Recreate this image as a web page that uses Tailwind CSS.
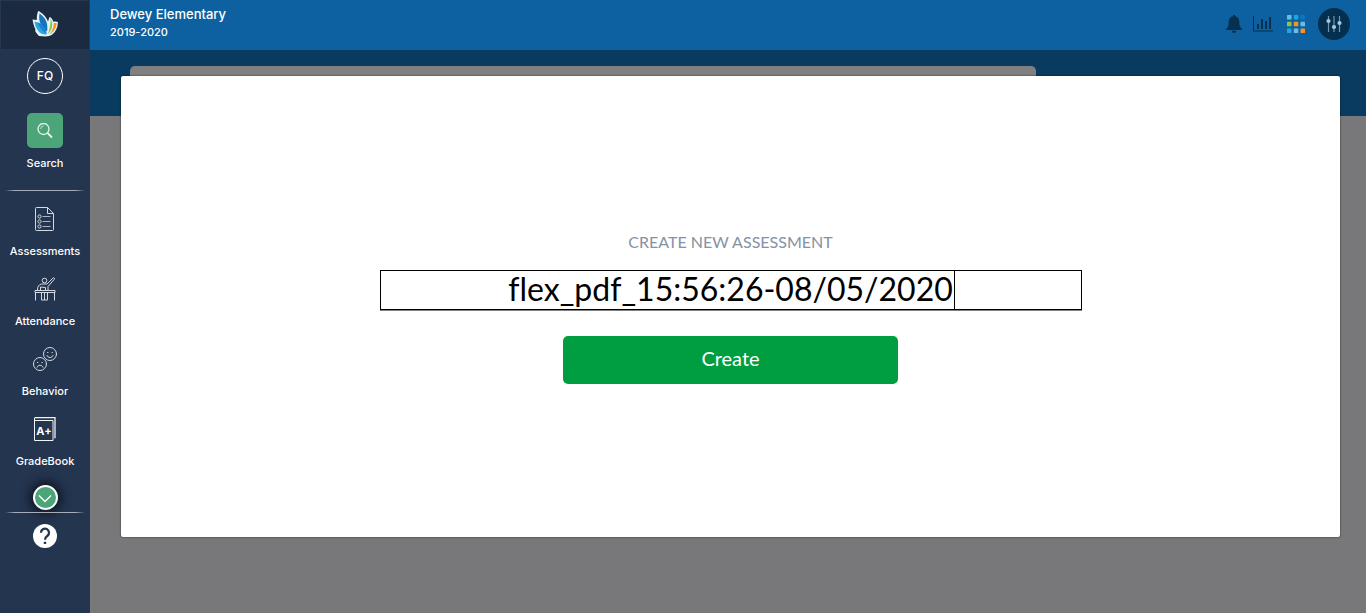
<!DOCTYPE html>
<html lang="en">
<head>
<meta charset="utf-8">
<meta name="viewport" content="width=device-width, initial-scale=1">
<title>Create New Assessment</title>
<script src="https://cdn.jsdelivr.net/npm/@tailwindcss/browser@4"></script>
</head>
<body class="flex min-h-screen bg-[#787779] font-['Inter',sans-serif]">

<aside class="flex w-[90px] shrink-0 flex-col items-center bg-[#243550] text-white">
  <a href="#" aria-label="Home" class="flex h-[50px] w-full items-center justify-center border border-[#243851] bg-[#1b2a3f]">
    <svg class="h-7 w-7" viewBox="0 0 28 28">
      <path d="M7.500-.5c1 1.500 7 4 9.500 11l1.500-4.500c1.500.5 3 2 4 5 1.500-.7 3-.5 4.500.3-.5 6-2.500 10-6 12.500-3 2-7 2-13 1.200C5 22 3.500 20 4.500 18.500 3 15.500 2 12 1.500 8.500l4.300.5C5.800 5.500 6 2 7.500-.5z" fill="#e4f3fa"/>
      <path d="M8.500 2.500c6 4 9 10 7.500 18C10 16 7 10 8.500 2.500z" fill="#1673bd"/>
      <path d="M3.500 10.500c7 1.500 11 6 12 13-3 .3-7-.7-8.500-4C5 17 4 14 3.500 10.500z" fill="#2fa6e2"/>
      <path d="M6.500 11c5 2.500 8.500 6.500 9.200 12C11 20 8 16 6.500 11z" fill="#1b86cf"/>
      <path d="M19.500 7.500c3 5 2 11-2.500 15.500 1.500-5 2.800-9.500 2.500-15.500z" fill="#8dc63f"/>
      <path d="M22.700 12.300c1-.4 2-.4 3-.2-.5 5-3 9.500-7.500 11.400 3-3.500 4.500-6.500 4.500-11.200z" fill="#f7941e"/>
    </svg>
  </a>
  <button type="button" class="mt-2 flex h-9 w-9 items-center justify-center rounded-full border border-white text-xs font-medium">FQ</button>
  <button type="button" class="mt-[19px] flex flex-col items-center text-[11px] leading-4 font-medium">
    <span class="mb-[7px] flex h-[35px] w-9 items-center justify-center rounded-[5px] bg-[#4ba578]">
      <svg class="h-4 w-4" viewBox="0 0 16 16" fill="none" stroke="#e4f7ee"><circle cx="6.500" cy="6" r="5.500" stroke-width="1.300"/><path d="M10.500 10l4.500 4.500" stroke-width="1.800"/><path d="M3.500 6a3 3 0 0 1 3-3" stroke-width=".7"/></svg>
    </span>
    Search
  </button>
  <div class="mt-[19px] h-px w-20 bg-[linear-gradient(to_right,transparent,#a5adb9_12%,#a5adb9_88%,transparent)]"></div>

  <nav class="mt-4 flex w-full flex-col gap-[18px] text-[11px] leading-4 font-medium">
    <a href="#" class="flex flex-col items-center gap-3">
      <svg class="block h-6 w-[26px]" viewBox="0 0 26 24" fill="none" stroke="#d5dae2"><path d="M15.500.5H4.500a1 1 0 0 0-1 1v21a1 1 0 0 0 1 1h16a1 1 0 0 0 1-1V6.500zM15.500.5v6h6"/><path d="M10.500 9.500h8M10.500 14.500h8M10.500 19.500h8" stroke="#aab3c1"/><circle cx="7.500" cy="9.500" r="1.600"/><circle cx="7.500" cy="14.500" r="1.600"/><circle cx="7.500" cy="19.500" r="1.600"/></svg>
      Assessments
    </a>
    <a href="#" class="flex flex-col items-center gap-3">
      <svg class="block h-6 w-6" viewBox="0 0 24 24" fill="none" stroke="#d5dae2"><path d="M2 13.500h20v2H2zM2.500 15.500V23.500M21.500 15.500V23.500M8.500 15.500V23h3v-7M11.500 23h3v-7.500"/><circle cx="11.500" cy="3.500" r="2.300"/><path d="M4.500 13c0-3 1-5.500 4-6h5.500l6-6c1-.7 2 .3 1.300 1.300L15 9.500v4M7.500 13v-3l5 .5v2.500"/></svg>
      Attendance
    </a>
    <a href="#" class="flex flex-col items-center gap-3">
      <svg class="block h-6 w-6" viewBox="0 0 24 24" fill="none" stroke="#d5dae2" stroke-linecap="round"><circle cx="17" cy="7" r="6.500"/><circle cx="7" cy="17" r="6.500"/><path d="M14 8.500c1 2.800 5 2.800 6 0M4 20.200c1-2.700 5-2.700 6 0"/><path d="M14.600 5.500h.4M19 5.500h.4M4.500 15.500h.4M9 15.500h.4"/></svg>
      Behavior
    </a>
    <a href="#" class="flex flex-col items-center gap-3">
      <svg class="block h-6 w-6" viewBox="0 0 24 24" fill="none" stroke="#f1f3f6"><path d="M1.500 1v22.500h18.500V3.500H1.500"/><path d="M1.500.7h20.500v20.500" stroke-width="1.300"/><text x="11" y="17.500" text-anchor="middle" font-size="11" font-weight="700" fill="#fff" stroke="none">A+</text></svg>
      GradeBook
    </a>
  </nav>

  <button type="button" aria-label="More" class="mt-4 flex h-[25px] w-[25px] items-center justify-center rounded-full border-2 border-white bg-[#4ba578] shadow-[0_0_10px_4px_#101826]">
    <svg class="h-4 w-4" viewBox="0 0 16 16" fill="none" stroke="#fff" stroke-width="1.300"><path d="M2 5.500l6 6 6-6"/></svg>
  </button>
  <div class="mt-0.5 h-px w-20 bg-[linear-gradient(to_right,transparent,#a5adb9_12%,#a5adb9_88%,transparent)]"></div>
  <button type="button" aria-label="Help" class="mt-[11px]">
    <svg class="block h-6 w-6" viewBox="0 0 24 24"><circle cx="12" cy="12" r="12" fill="#fff"/><path d="M8 8.700a4 4 0 1 1 6.500 3.100c-1.500 1.100-2.500 1.700-2.500 3.900" fill="none" stroke="#243550" stroke-width="2.300"/><path d="M10.800 17.700h2.400V20h-2.400z" fill="#243550"/></svg>
  </button>
</aside>

<div class="flex min-w-0 flex-1 flex-col">
  <header class="flex h-[50px] shrink-0 items-center justify-between bg-[#0d61a0] pr-4 pb-0.5 pl-5 text-white">
    <div class="-mt-1">
      <h1 class="text-[13px] leading-5 font-medium">Dewey Elementary</h1>
      <p class="text-[11px] leading-4 font-medium">2019-2020</p>
    </div>
    <div class="flex items-center">
      <button type="button" aria-label="Notifications">
        <svg class="block h-[18px] w-4" viewBox="0 0 16 18" fill="#05304f"><path d="M8 0c.8 0 1.200.5 1.200 1.200C12 2 13.300 4 13.300 7c0 4 .8 5.500 2.700 7v1H0v-1c1.900-1.500 2.700-3 2.700-7 0-3 1.300-5 4.100-5.800C6.800.5 7.200 0 8 0zM5.800 15.700h4.400a2.200 2.200 0 0 1-4.400 0z"/></svg>
      </button>
      <button type="button" aria-label="Reports" class="ml-[11px]">
        <svg class="block h-4 w-5" viewBox="0 0 20 16" fill="#05304f"><path d="M0 0h1v14.500h19v1H0zM4 8h2v5H4zM8 3h2v10H8zM12 5h2v8h-2zM16 1h2v12h-2z"/></svg>
      </button>
      <button type="button" aria-label="Apps" class="ml-3.5">
        <svg class="block h-[18px] w-[18px]" viewBox="0 0 18 18"><g fill="#66bfe3"><rect width="4.500" height="4.500" rx=".6"/><rect x="13.500" y="6.800" width="4.500" height="4.500" rx=".6"/><rect x="6.800" y="13.500" width="4.500" height="4.500" rx=".6"/></g><g fill="#23a3e2"><rect x="6.800" width="4.500" height="4.500" rx=".6"/><rect y="13.500" width="4.500" height="4.500" rx=".6"/></g><rect x="13.500" width="4.500" height="4.500" rx=".6" fill="#0b78c4"/><rect y="6.800" width="4.500" height="4.500" rx=".6" fill="#8cc63f"/><g fill="#f7931e"><rect x="6.800" y="6.800" width="4.500" height="4.500" rx=".6"/><rect x="13.500" y="13.500" width="4.500" height="4.500" rx=".6"/></g></svg>
      </button>
      <button type="button" aria-label="Settings" class="ml-[13px] flex h-8 w-8 items-center justify-center rounded-full bg-[#052f4e]">
        <svg class="h-4 w-4" viewBox="0 0 16 16"><path d="M2.500 0v16M8 0v16M13.500 0v16" stroke="#7396ad" stroke-width="1.200"/><g fill="#9fc9e4"><circle cx="2.500" cy="5" r="2.100"/><circle cx="8" cy="11" r="2.100"/><circle cx="13.500" cy="7" r="2.100"/></g></svg>
      </button>
    </div>
  </header>

  <main class="relative flex-1">
    <div class="h-[66px] bg-[#093a60] pt-4 pr-[330px] pl-10">
      <div class="h-[50px] rounded-t-[5px] bg-[#808080]"></div>
    </div>

    <!-- Dialog -->
    <section role="dialog" aria-labelledby="dialog-title" class="absolute top-[26px] right-[26px] left-[31px] flex min-h-[461px] flex-col items-center justify-center rounded-[2px] bg-white font-['Lato',sans-serif] shadow-[0_0_2px_rgba(0,0,0,0.7)]">
      <label id="dialog-title" for="assessment-name" class="text-base leading-6 text-[#8492a6]">CREATE NEW ASSESSMENT</label>
      <div class="relative mt-4 w-[702px] max-w-full">
        <input id="assessment-name" type="text" value="flex_pdf_15:56:26-08/05/2020" class="block h-10 w-full border border-black bg-white pb-0.5 text-center text-[32px] text-black shadow-[0_1px_0_#808080] outline-none [font-variant-ligatures:none]">
        <span class="absolute inset-y-0 left-[calc(50%+223px)] w-px bg-black"></span>
      </div>
      <button type="button" class="mt-[26px] h-12 w-[335px] rounded-[5px] bg-[#009e40] pb-1 text-xl text-white">Create</button>
    </section>
  </main>
</div>
</body>
</html>
